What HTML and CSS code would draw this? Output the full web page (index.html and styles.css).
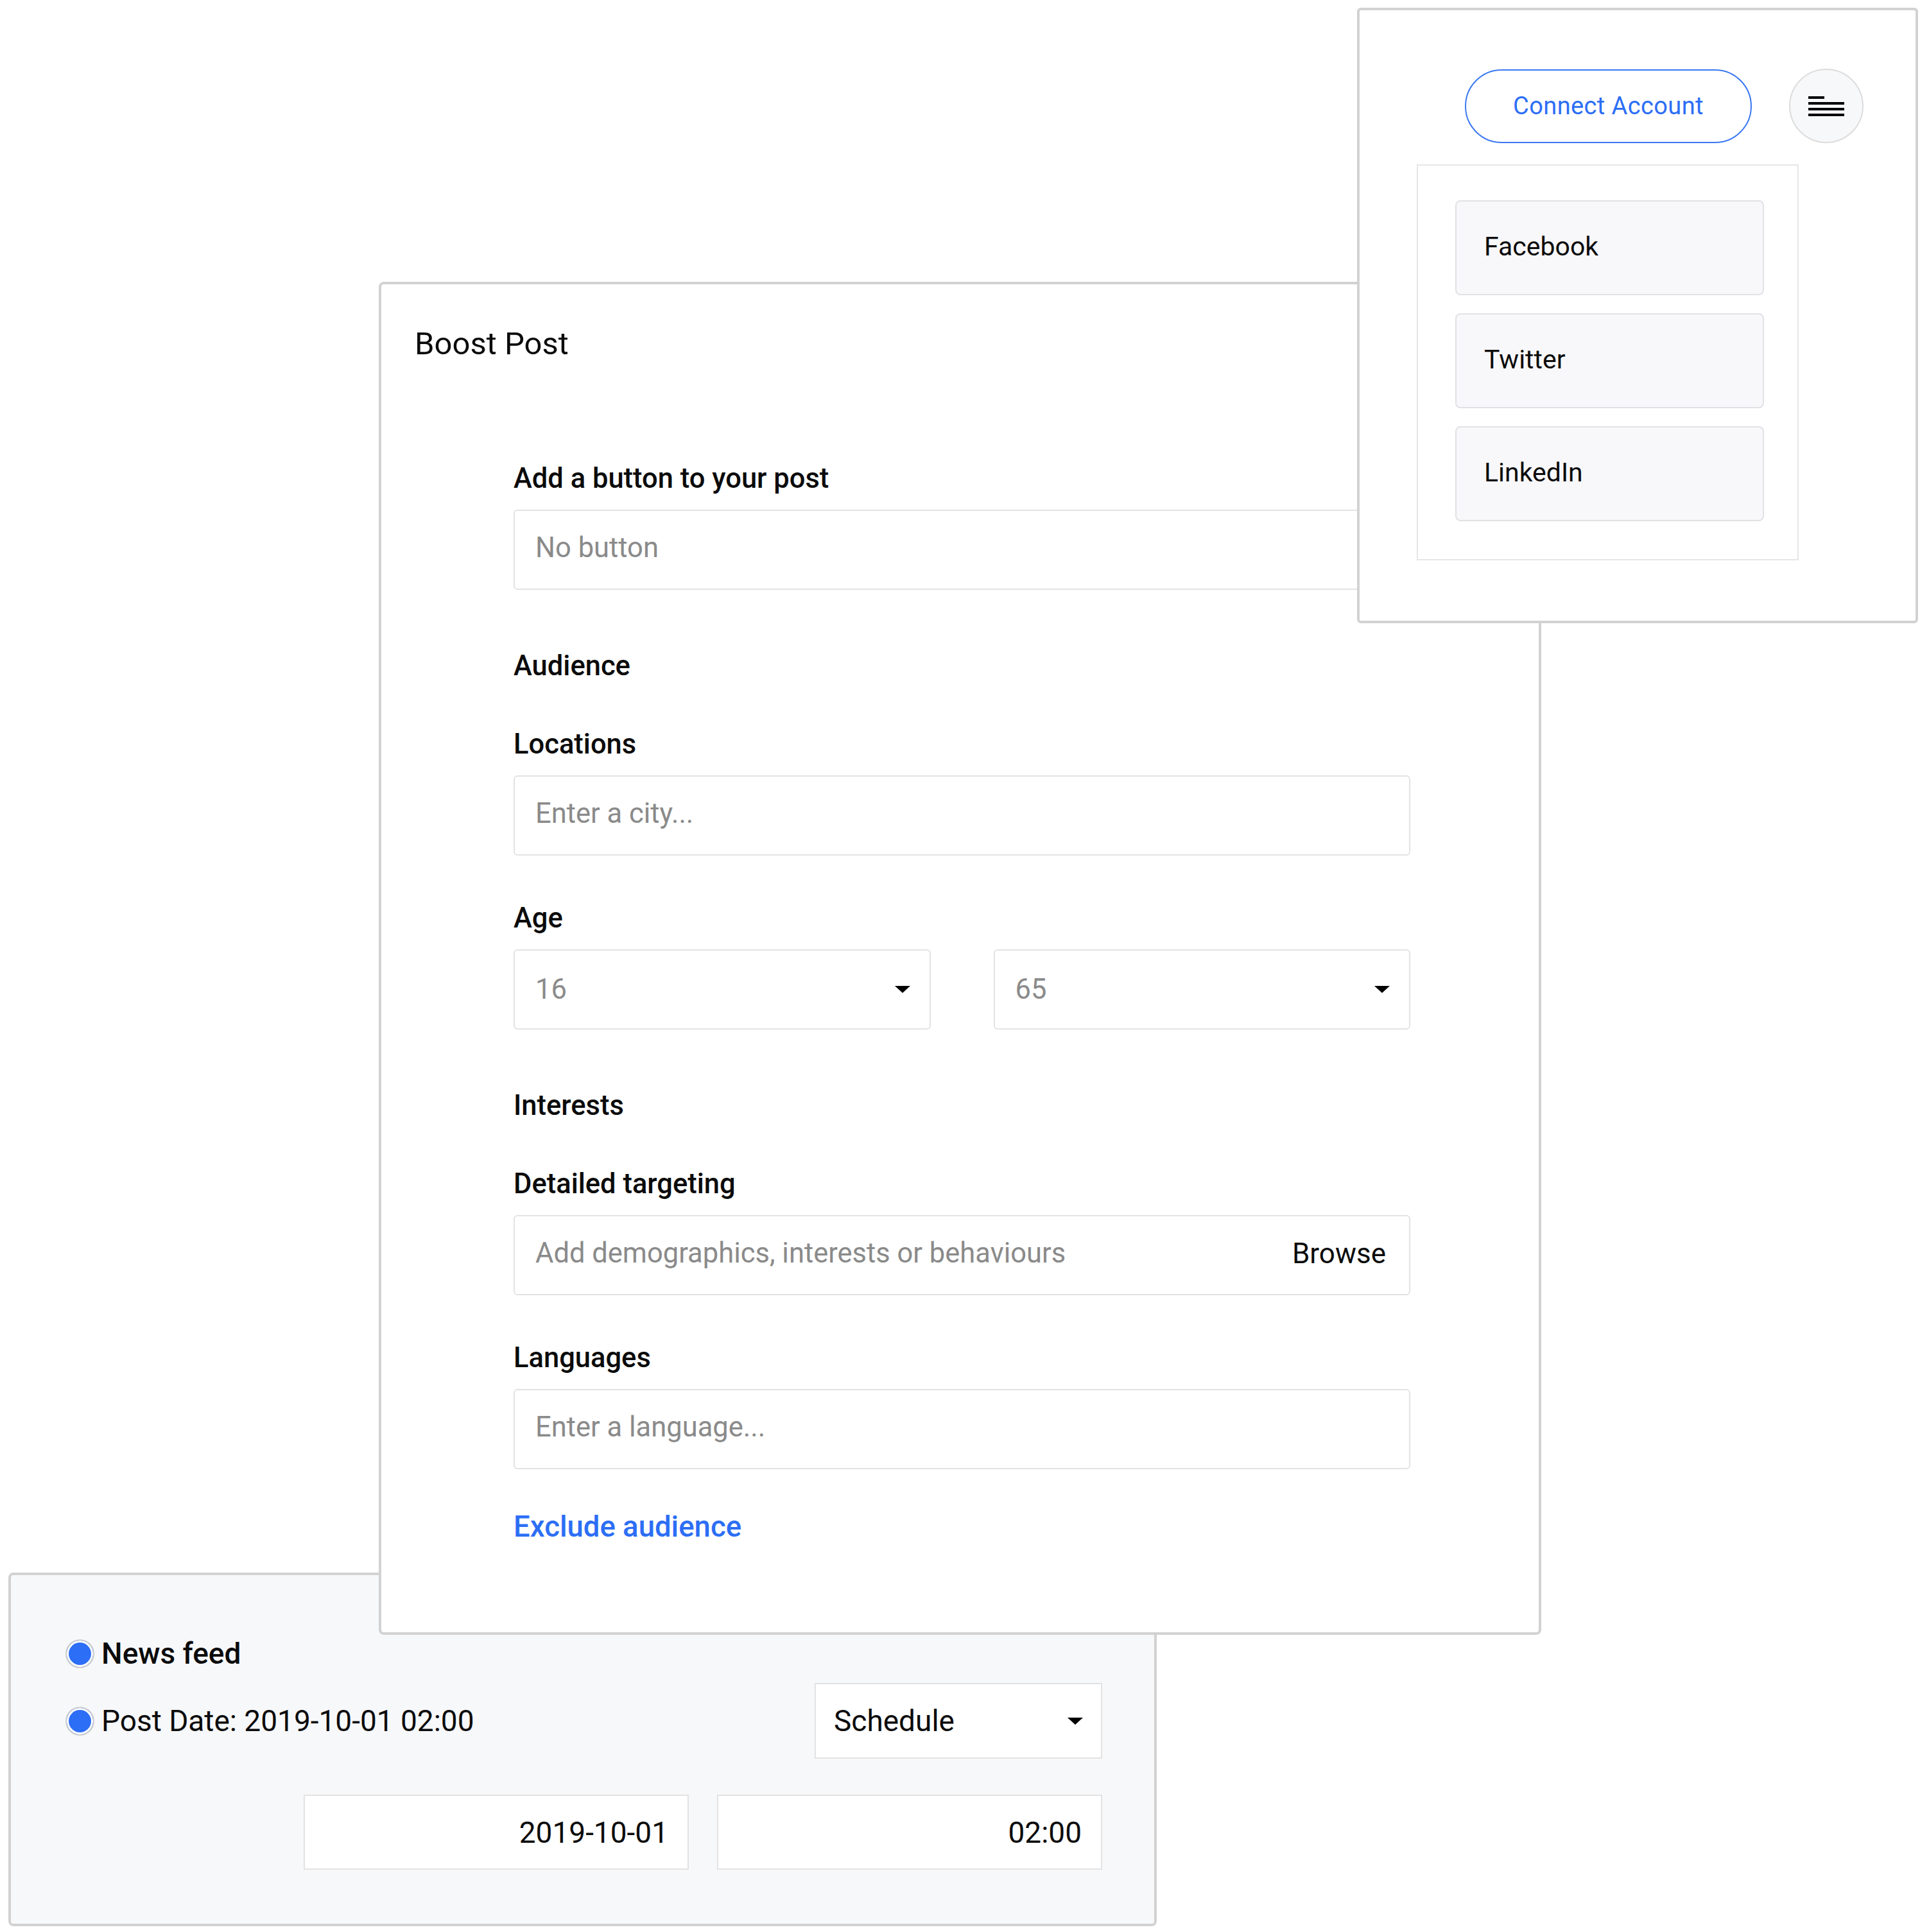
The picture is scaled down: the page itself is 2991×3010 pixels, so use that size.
FILE: index.html
```html
<!DOCTYPE html>
<html lang="en">
<head>
  <meta charset="UTF-8">
  <title>Boost Post</title>
  <link rel="stylesheet" href="styles.css">
</head>
<body>

<div class="canvas">

  <section class="schedule-panel">
    <div class="option">
      <span class="radio"></span>
      <span class="option-title">News feed</span>
    </div>
    <div class="option post-date">
      <span class="radio"></span>
      <span>Post Date: 2019-10-01 02:00</span>
      <div class="dropdown">
        <span>Schedule</span>
        <span class="caret"></span>
      </div>
    </div>
    <div class="date-row">
      <div class="date-box">2019-10-01</div>
      <div class="date-box">02:00</div>
    </div>
  </section>

  <section class="boost-card">
    <h2>Boost Post</h2>
    <div class="form">
      <div class="field first">
        <label>Add a button to your post</label>
        <div class="input">No button</div>
      </div>

      <div class="heading">Audience</div>

      <div class="field">
        <label>Locations</label>
        <div class="input">Enter a city...</div>
      </div>

      <div class="field">
        <label>Age</label>
        <div class="age-row">
          <div class="input select"><span>16</span><span class="caret"></span></div>
          <div class="input select"><span>65</span><span class="caret"></span></div>
        </div>
      </div>

      <div class="heading">Interests</div>

      <div class="field">
        <label>Detailed targeting</label>
        <div class="input browse-input">
          <span>Add demographics, interests or behaviours</span>
          <span class="browse">Browse</span>
        </div>
      </div>

      <div class="field">
        <label>Languages</label>
        <div class="input">Enter a language...</div>
      </div>

      <a class="exclude" href="#">Exclude audience</a>
    </div>
  </section>

  <section class="account-panel">
    <div class="account-row">
      <button class="connect">Connect Account</button>
      <button class="menu-btn">
        <svg width="56" height="31" viewBox="0 0 56 31">
          <rect x="0" y="0" width="25" height="4" fill="#000"/>
          <rect x="0" y="9" width="56" height="4" fill="#000"/>
          <rect x="0" y="18" width="56" height="4" fill="#000"/>
          <rect x="0" y="27" width="56" height="4" fill="#000"/>
        </svg>
      </button>
    </div>
    <div class="network-list">
      <div class="network">Facebook</div>
      <div class="network">Twitter</div>
      <div class="network">LinkedIn</div>
    </div>
  </section>

</div>

</body>
</html>
```

FILE: styles.css
```css
body { margin: 0; background: #fff; font-family: Roboto, "Liberation Sans", sans-serif; color: #0b0b0b; }
.canvas { position: relative; width: 2991px; height: 3010px; }

/* windows on the canvas */
.schedule-panel, .boost-card, .account-panel { position: absolute; box-sizing: border-box; border: 4px solid #d2d2d2; border-radius: 8px; }
.schedule-panel { left: 13px; top: 2450px; width: 1789px; height: 551px; background: #f7f8fa; padding: 94px 81px 0 85px; }
.boost-card { left: 590px; top: 439px; width: 1811px; height: 2108px; background: #fff; padding: 65px 0 0 52px; }
.account-panel { left: 2114px; top: 12px; width: 874px; height: 959px; background: #fff; padding: 91px 0 0 0; border-radius: 6px; }

/* boost post card */
.boost-card h2 { margin: 0; font-size: 49px; line-height: 56px; font-weight: 400; }
.form { width: 1397px; margin: 156px 0 0 154px; }
label, .heading { display: block; font-size: 43.5px; line-height: 52px; font-weight: 500; }
label { margin-bottom: 22px; }
.field { margin-top: 72px; }
.field.first { margin-top: 0; }
.heading { margin-top: 93px; }
.heading + .field { margin-top: 70px; }
.input { box-sizing: border-box; height: 125px; border: 2px solid #e3e3e3; border-radius: 6px; padding: 0 32px 6px; display: flex; align-items: center; font-size: 43.5px; color: #8a8a8a; background: #fff; }
.age-row { display: grid; grid-template-columns: 1fr 1fr; gap: 98px; }
.select { justify-content: space-between; padding: 0 30px 0 32px; }
.caret { width: 0; height: 0; border-left: 12px solid transparent; border-right: 12px solid transparent; border-top: 11px solid #000; }
.browse-input { justify-content: space-between; padding-right: 36px; }
.browse { color: #0b0b0b; font-size: 44px; }
.exclude { display: block; margin-top: 64px; font-size: 45.5px; line-height: 52px; font-weight: 500; color: #2c6ef5; text-decoration: none; }

/* account panel */
.account-row { display: flex; align-items: center; gap: 58px; margin-left: 164px; }
.connect { box-sizing: border-box; width: 447px; height: 115px; border: 2px solid #3a78f2; border-radius: 58px; background: #fff; color: #2c6ef5; font-family: Roboto, "Liberation Sans", sans-serif; font-size: 38px; letter-spacing: 0.4px; padding: 0; }
.menu-btn { box-sizing: border-box; width: 116px; height: 116px; border: 2px solid #dcdcdc; border-radius: 50%; background: #f7f8fa; padding: 0; display: flex; align-items: center; justify-content: center; }
.network-list { box-sizing: border-box; width: 595px; height: 617px; margin: 33px 0 0 89px; border: 2px solid #e6e6e6; padding: 54px 0 0 58px; display: flex; flex-direction: column; gap: 28px; }
.network { box-sizing: border-box; width: 481px; height: 148px; background: #f8f8fa; border: 2px solid #e2e2e6; border-radius: 8px; display: flex; align-items: center; padding: 0 0 4px 43px; font-size: 41px; color: #0b0b0b; }

/* schedule panel */
.option { display: flex; align-items: center; gap: 11px; font-size: 46px; line-height: 56px; }
.option-title { font-weight: 500; }
.radio { box-sizing: border-box; width: 45px; height: 45px; border-radius: 50%; border: 2px solid #cfcfcf; background: #2c6ef5; box-shadow: inset 0 0 0 3px #fff; flex: none; }
.post-date { margin-top: 18px; }
.dropdown { box-sizing: border-box; margin-left: auto; width: 448px; height: 118px; background: #fff; border: 2px solid #e3e3e3; display: flex; align-items: center; justify-content: space-between; padding: 0 28px; }
.date-row { display: flex; justify-content: flex-end; gap: 44px; margin-top: 56px; }
.date-box { box-sizing: border-box; width: 600px; height: 117px; background: #fff; border: 2px solid #e3e3e3; display: flex; align-items: center; justify-content: flex-end; padding-right: 30px; font-size: 46px; }
```
